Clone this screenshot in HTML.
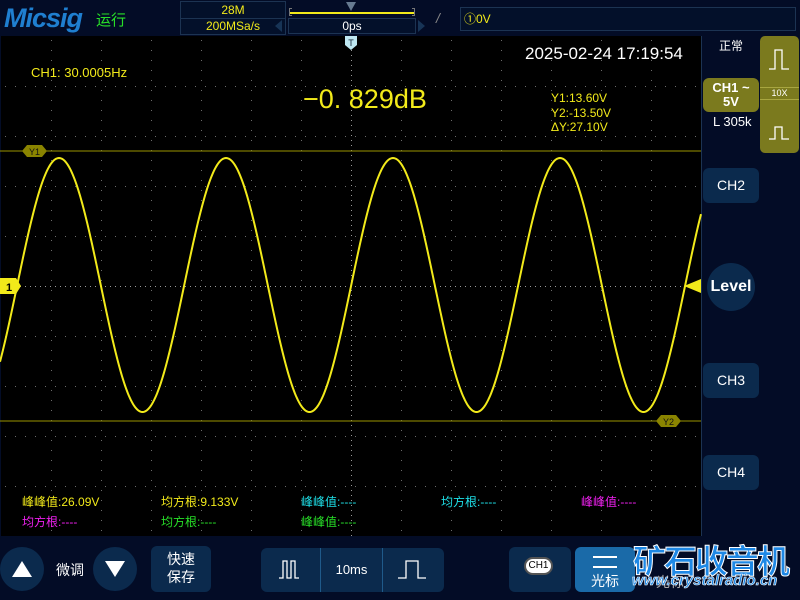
<!DOCTYPE html>
<html><head><meta charset="utf-8"><style>
*{margin:0;padding:0;box-sizing:border-box}
body{width:800px;height:600px;background:#030c26;position:relative;overflow:hidden;font-family:"Liberation Sans","Noto Sans CJK SC",sans-serif;color:#fff}
.a{position:absolute}
.box{position:absolute;border:1px solid #1c3352;background:#03102a}
.btn{position:absolute;background:#0b2a4d;border-radius:6px;color:#fff;text-align:center}
.y{color:#f2ea1a}
.m{font-size:13px;position:absolute}
</style></head><body>
<!-- top bar -->
<div class="a" style="left:4px;top:3px;font:italic bold 27px 'Liberation Sans',sans-serif;color:#1f7fd0;letter-spacing:-1px">Micsig</div>
<div class="a" style="left:96px;top:9px;font-size:15px;color:#28e028">运行</div>
<div class="box" style="left:180px;top:1px;width:106px;height:34px"></div>
<div class="a" style="left:180px;top:18px;width:106px;height:1px;background:#1c3352"></div>
<div class="a y" style="left:180px;top:3px;width:106px;text-align:center;font-size:12px">28M</div>
<div class="a y" style="left:180px;top:19px;width:106px;text-align:center;font-size:12px">200MSa/s</div>
<div class="a" style="left:189px;top:3px;width:82px;height:0"></div>
<div class="a" style="left:289px;top:12px;width:126px;height:2px;background:#f2ea1a"></div>
<div class="a" style="left:289px;top:8px;width:3px;height:8px;border:1px solid #777;border-right:none"></div>
<div class="a" style="left:412px;top:8px;width:3px;height:8px;border:1px solid #777;border-left:none"></div>
<div class="a" style="left:346px;top:2px;border-left:5px solid transparent;border-right:5px solid transparent;border-top:9px solid #667a90"></div>
<div class="box" style="left:288px;top:18px;width:128px;height:16px;color:#fff;font-size:12px;text-align:center;line-height:15px">0ps</div>
<div class="a" style="left:275px;top:20px;border-top:6px solid transparent;border-bottom:6px solid transparent;border-right:7px solid #173456"></div>
<div class="a" style="left:418px;top:20px;border-top:6px solid transparent;border-bottom:6px solid transparent;border-left:7px solid #173456"></div>
<div class="a" style="left:436px;top:10px;color:#888;font-size:14px;font-style:italic">/</div>
<div class="box" style="left:460px;top:7px;width:336px;height:24px;font-size:12px;line-height:22px;padding-left:3px;color:#f2ea1a">①0V</div>

<!-- grid -->
<svg class="a" style="left:0;top:35px" width="702" height="501" viewBox="0 35 702 501">
<rect x="1" y="36" width="700" height="500" fill="#000"/>
<line x1="701.5" y1="36" x2="701.5" y2="536" stroke="#1c3352"/>
<g id="g" fill="#6a6a6a"></g>
<line x1="0" y1="151" x2="701" y2="151" stroke="#9a9400" stroke-width="1"/>
<line x1="0" y1="421" x2="701" y2="421" stroke="#9a9400" stroke-width="1"/>
<polygon points="22,151 27,145 42,145 47,151 42,157 27,157" fill="#8a8400"/>
<text x="34.5" y="155" font-size="9" fill="#111" text-anchor="middle" font-family="Liberation Sans">Y1</text>
<polygon points="656,421 661,415 676,415 681,421 676,427 661,427" fill="#8a8400"/>
<text x="668.5" y="425" font-size="9" fill="#111" text-anchor="middle" font-family="Liberation Sans">Y2</text>
<polyline id="s" fill="none" stroke="#f2ea1a" stroke-width="2"/>
<polygon points="345,36 357,36 357,45 351,50 345,45" fill="#bfe8f2"/>
<text x="351" y="46" font-size="9" fill="#123" text-anchor="middle" font-family="Liberation Sans">T</text>
<polygon points="0,278 16,278 21,286 16,294 0,294" fill="#f2ea1a"/>
<text x="9" y="291" font-size="11" font-weight="bold" fill="#000" text-anchor="middle" font-family="Liberation Sans">1</text>
<polygon points="701,279 701,293 684,286" fill="#f2ea1a"/>
</svg>
<script>
var g=document.getElementById('g'),h='';
for(var x=51;x<701;x+=50)for(var y=40;y<536;y+=10)h+='<rect x="'+x+'" y="'+y+'" width="1" height="1"/>';
for(var y=86;y<536;y+=50)for(var x=5;x<701;x+=10)h+='<rect x="'+x+'" y="'+y+'" width="1" height="1"/>';
for(var y=40;y<536;y+=5)h+='<rect x="351" y="'+y+'" width="1" height="1" fill="#999"/>';
for(var x=5;x<701;x+=5)h+='<rect x="'+x+'" y="286" width="1" height="1" fill="#999"/>';
g.innerHTML=h;
var p='';for(var x=0;x<=701;x+=1){var y=285-127*Math.cos(2*Math.PI*(x-59)/167);p+=x+','+y.toFixed(1)+' ';}
document.getElementById('s').setAttribute('points',p);
</script>
<div class="m y" style="left:31px;top:65px">CH1: 30.0005Hz</div>
<div class="a y" style="left:303px;top:84px;font-size:27px">−0. 829dB</div>
<div class="a" style="left:525px;top:44px;font-size:17px">2025-02-24 17:19:54</div>
<div class="a y" style="left:551px;top:91px;font-size:12px;line-height:14.5px">Y1:13.60V<br>Y2:-13.50V<br>ΔY:27.10V</div>
<div class="m" style="left:22px;top:493px;color:#f2ea1a;font-size:12px">峰峰值:26.09V</div>
<div class="m" style="left:161px;top:493px;color:#f2ea1a;font-size:12px">均方根:9.133V</div>
<div class="m" style="left:301px;top:493px;color:#1ee0e8;font-size:12px">峰峰值:----</div>
<div class="m" style="left:441px;top:493px;color:#1ee0e8;font-size:12px">均方根:----</div>
<div class="m" style="left:581px;top:493px;color:#f020f0;font-size:12px">峰峰值:----</div>
<div class="m" style="left:22px;top:513px;color:#f020f0;font-size:12px">均方根:----</div>
<div class="m" style="left:161px;top:513px;color:#28e028;font-size:12px">均方根:----</div>
<div class="m" style="left:301px;top:513px;color:#28e028;font-size:12px">峰峰值:----</div>

<!-- right panel -->
<div class="a" style="left:719px;top:37px;font-size:12px">正常</div>
<div class="a" style="left:760px;top:36px;width:39px;height:117px;background:#7b7a1e;border-radius:5px"></div>
<div class="a" style="left:760px;top:87px;width:39px;height:13px;border-top:1px solid #a8a640;border-bottom:1px solid #a8a640;font-size:9px;text-align:center;line-height:11px">10X</div>
<svg class="a" style="left:760px;top:36px" width="39" height="117"><path d="M9 33H15V14H22V33H29" fill="none" stroke="#fff" stroke-width="1.3"/><path d="M9 103H15V91H22V103H29" fill="none" stroke="#fff" stroke-width="1.3"/></svg>
<div class="a" style="left:703px;top:78px;width:56px;height:34px;background:#7b7a1e;border-radius:6px;text-align:center;font-weight:bold;font-size:13px;line-height:14px;padding-top:3px">CH1 ~<br>5V</div>
<div class="a" style="left:713px;top:114px;font-size:13px">L 305k</div>
<div class="btn" style="left:703px;top:168px;width:56px;height:35px;line-height:35px;font-size:14px">CH2</div>
<div class="a" style="left:707px;top:263px;width:48px;height:48px;border-radius:50%;background:#0b2a4d;text-align:center;line-height:48px;font-size:16px;font-weight:bold">Level</div>
<div class="btn" style="left:703px;top:363px;width:56px;height:35px;line-height:35px;font-size:14px">CH3</div>
<div class="btn" style="left:703px;top:455px;width:56px;height:35px;line-height:35px;font-size:14px">CH4</div>

<!-- bottom bar -->
<div class="a" style="left:0;top:547px;width:44px;height:44px;border-radius:50%;background:#0b2a4d"></div>
<div class="a" style="left:12px;top:561px;border-left:10px solid transparent;border-right:10px solid transparent;border-bottom:16px solid #fff"></div>
<div class="a" style="left:56px;top:560px;font-size:14px">微调</div>
<div class="a" style="left:93px;top:547px;width:44px;height:44px;border-radius:50%;background:#0b2a4d"></div>
<div class="a" style="left:105px;top:561px;border-left:10px solid transparent;border-right:10px solid transparent;border-top:16px solid #fff"></div>
<div class="btn" style="left:151px;top:546px;width:60px;height:46px;font-size:14px;line-height:18px;padding-top:4px">快速<br>保存</div>
<div class="btn" style="left:261px;top:548px;width:183px;height:44px"></div>
<div class="a" style="left:320px;top:548px;width:1px;height:44px;background:#1f5a8a"></div>
<div class="a" style="left:382px;top:548px;width:1px;height:44px;background:#1f5a8a"></div>
<div class="a" style="left:321px;top:562px;width:61px;text-align:center;font-size:13px">10ms</div>
<svg class="a" style="left:261px;top:548px" width="183" height="44"><path d="M18 30H22V13H26V30H30V13H34V30H38" fill="none" stroke="#fff" stroke-width="1.3"/><path d="M137 30H145V13H157V30H165" fill="none" stroke="#fff" stroke-width="1.3"/></svg>
<div class="btn" style="left:509px;top:547px;width:62px;height:45px"></div>
<div class="a" style="left:524px;top:557px;width:29px;height:18px;border-radius:9px;background:#fff;border:2px solid #555;color:#000;font-size:10px;text-align:center;line-height:14px">CH1</div>
<div class="a" style="left:575px;top:547px;width:60px;height:45px;background:#1a6aa8;border-radius:6px;text-align:center;font-size:14px;padding-top:24px">光标</div>
<div class="a" style="left:593px;top:556px;width:24px;height:2px;background:#fff"></div>
<div class="a" style="left:593px;top:566px;width:24px;height:2px;background:#fff"></div>
<div class="a" style="left:656px;top:572px;font-size:14px;color:#aaa">光标</div>
<div class="a" style="left:633px;top:535px;font-size:33px;font-weight:bold;color:#1e88e5;letter-spacing:-2px;-webkit-text-stroke:1px #fff">矿石收音机</div>
<div class="a" style="left:632px;top:572px;font-size:15px;font-weight:bold;font-style:italic;color:#1e88e5;-webkit-text-stroke:0.6px #fff">www.crystalradio.cn</div>
</body></html>
